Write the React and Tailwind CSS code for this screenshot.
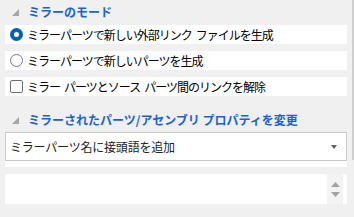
import React from 'react';

const font = { fontFamily: '"Noto Sans CJK JP", "Noto Sans", sans-serif' };

function SectionHeader({ title }) {
  return (
    <div className="flex h-[24px] items-center">
      {/* collapse corner triangle */}
      <svg width="7" height="7" viewBox="0 0 7 7" className="ml-[7px] mr-[9px]">
        <polygon points="7,0 7,7 0,7" fill="#a6a6a6" />
      </svg>
      <span className="text-[12px] font-bold leading-none text-[#1a62d0]">{title}</span>
    </div>
  );
}

function Row({ control, label }) {
  const parts = label.split(' ');
  return (
    <div className="flex h-[19px] items-center bg-white">
      <div className="flex w-[22px] items-center justify-center">{control}</div>
      <span className="text-[12px] leading-none tracking-[-1px] text-black">
        {parts.map((p, i) => (
          <React.Fragment key={i}>
            {i > 0 && <span className="inline-block w-[4px]" />}
            {p}
          </React.Fragment>
        ))}
      </span>
    </div>
  );
}

export default function App() {
  return (
    <div className="relative h-[217px] w-[354px] overflow-hidden bg-[#f0f0f0]" style={font}>
      <div className="flex w-[347px] flex-col pl-[5px]">
        <SectionHeader title="ミラーのモード" />

        <div className="mt-[1px] flex flex-col gap-[7px]">
          <Row
            control={<span className="block h-[13px] w-[13px] rounded-full border-[4px] border-[#0063b1] bg-white" />}
            label="ミラーパーツで新しい外部リンク ファイルを生成"
          />
          <Row
            control={<span className="block h-[13px] w-[13px] rounded-full border border-[#7a7a7a] bg-white" />}
            label="ミラーパーツで新しいパーツを生成"
          />
          <Row
            control={<span className="block h-[13px] w-[13px] rounded-[2px] border border-[#6e6e6e] bg-white" />}
            label="ミラー パーツとソース パーツ間のリンクを解除"
          />
        </div>

        <div className="mt-[12px]">
          <SectionHeader title="ミラーされたパーツ/アセンブリ プロパティを変更" />
        </div>

        {/* dropdown */}
        <div className="flex h-[29px] items-center justify-between border border-[#c9c9c9] bg-white pl-[4px] pr-[9px]">
          <span className="text-[12px] leading-none tracking-[-0.2px] text-[#222]">ミラーパーツ名に接頭語を追加</span>
          <svg width="6" height="4" viewBox="0 0 6 4">
            <polygon points="0,0 6,0 3,4" fill="#606060" />
          </svg>
        </div>
        <div className="h-[6px] bg-white" />

        {/* text box with spinner */}
        <div className="mt-[7px] flex h-[30px] bg-white">
          <div className="flex-1" />
          <div className="mr-[4px] flex w-[16px] flex-col items-center justify-center gap-[5px] bg-[#f3f3f3]">
            <svg width="9" height="5" viewBox="0 0 9 5">
              <polygon points="4.5,0 9,5 0,5" fill="#a3a3a3" />
            </svg>
            <svg width="9" height="5" viewBox="0 0 9 5">
              <polygon points="0,0 9,0 4.5,5" fill="#a3a3a3" />
            </svg>
          </div>
        </div>
      </div>

      {/* scrollbar thumb along right edge */}
      <div className="absolute right-0 top-0 h-[160px] w-[2px] bg-[#cfcfcf]" />
    </div>
  );
}
